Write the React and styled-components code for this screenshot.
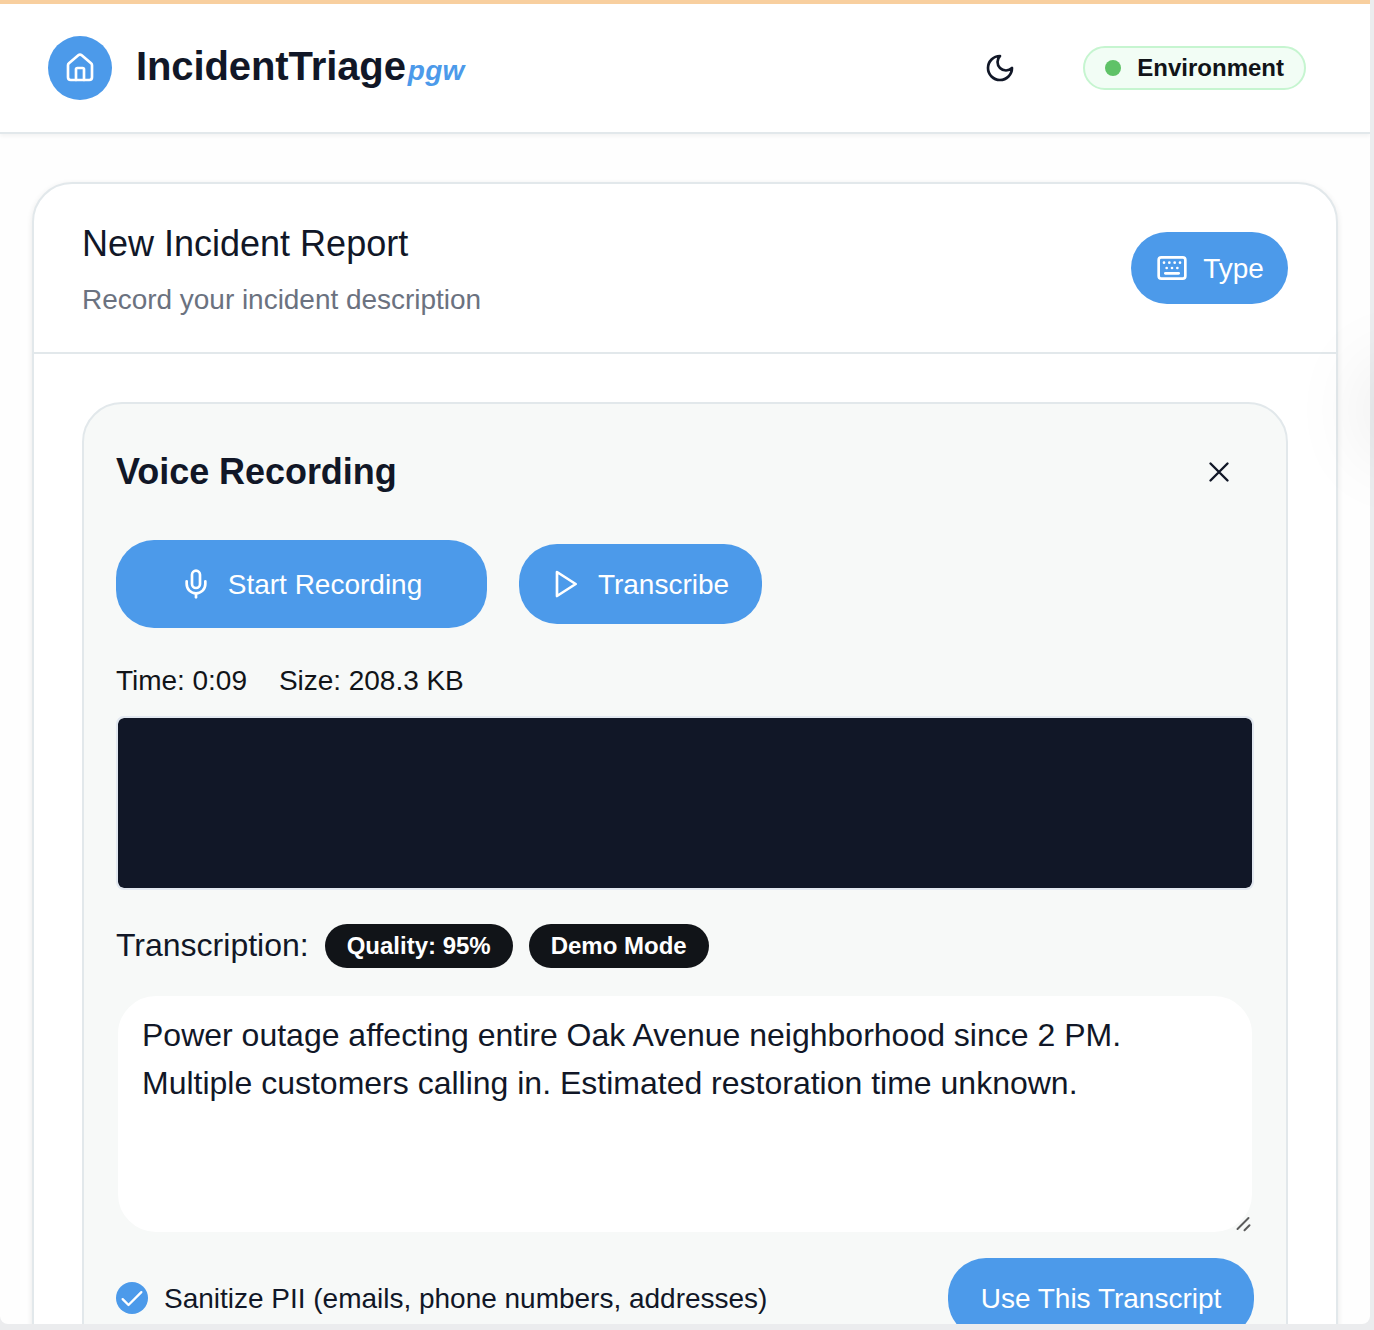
import React from "react";
import styled, { createGlobalStyle } from "styled-components";
import { House, Keyboard, Mic } from "lucide-react";

const blue = "#4c9aea";
const ink = "#111727";
const line = "#e2e8eb";

const Global = createGlobalStyle`
  *, *::before, *::after { box-sizing: border-box; }
  html, body { margin: 0; background: #ebecee; overflow: hidden; }
  body, button, textarea { font-family: "Liberation Sans", Arial, sans-serif; color: ${ink}; }
  button { border: 0; padding: 0; background: none; }
  h1, h2, h3, p { margin: 0; }
`;

const Desktop = styled.div`
  position: relative;
  width: 1374px;
  height: 1330px;
  overflow: hidden;
  background: #ebecee;
`;

const Window = styled.div`
  width: 1370px;
  height: 1324px;
  overflow: hidden;
  background: #fefefe;
  border-radius: 0 0 8px 8px;
`;

const EdgeShade = styled.div`
  position: absolute;
  left: 1384px;
  top: 380px;
  width: 40px;
  height: 60px;
  border-radius: 20px;
  box-shadow: 0 0 84px 10px rgba(0, 0, 0, 0.13);
  pointer-events: none;
`;

const Header = styled.header`
  display: flex;
  align-items: center;
  height: 134px;
  padding: 0 64px 0 48px;
  border-top: 4px solid #f8cf9f;
  border-bottom: 2px solid ${line};
  background: #fff;
  box-shadow: 0 2px 4px rgba(0, 0, 0, 0.05);
`;

const Logo = styled.div`
  display: grid;
  place-items: center;
  width: 64px;
  height: 64px;
  margin-right: 24px;
  border-radius: 50%;
  color: #fff;
  background: ${blue};
`;

const Brand = styled.h1`
  flex: 1;
  font-size: 40px;
  line-height: 56px;
  letter-spacing: -0.1px;
`;

const BrandSuffix = styled.em`
  font-size: 28px;
  letter-spacing: 0.3px;
  margin-left: 2px;
  color: ${blue};
`;

const IconButton = styled.button`
  display: grid;
  place-items: center;
  width: ${(p) => p.$w || 72}px;
  height: 72px;
`;

const EnvPill = styled.div`
  display: flex;
  align-items: center;
  gap: 16px;
  height: 44px;
  margin-left: 47px;
  padding: 0 20px;
  border: 2px solid #c6f5d0;
  border-radius: 22px;
  background: #f2fdf5;
  color: #111418;
  font-size: 24px;
  font-weight: 700;
`;

const Dot = styled.span`
  width: 16px;
  height: 16px;
  border-radius: 50%;
  background: #5fc267;
`;

const Card = styled.main`
  margin: 48px 32px 0;
  width: 1306px;
  height: 1300px;
  border: 2px solid ${line};
  border-radius: 40px;
  background: #fff;
  box-shadow: 0 2px 6px rgba(0, 0, 0, 0.09);
`;

const CardHead = styled.div`
  display: flex;
  align-items: center;
  justify-content: space-between;
  height: 170px;
  padding: 0 48px;
  border-bottom: 2px solid ${line};
`;

const Heading = styled.div`
  padding-bottom: 2px;
`;

const Title = styled.h2`
  font-size: 36px;
  font-weight: 400;
  line-height: 56px;
`;

const Subtitle = styled.p`
  margin-top: 10px;
  font-size: 28px;
  line-height: 36px;
  letter-spacing: -0.03px;
  color: #6b7280;
`;

const Button = styled.button`
  display: flex;
  align-items: center;
  justify-content: center;
  gap: 16px;
  flex: none;
  width: ${(p) => p.$w}px;
  height: ${(p) => p.$h}px;
  border-radius: 38px;
  background: ${blue};
  color: #fff;
  font-size: 28px;
  line-height: 40px;
  white-space: nowrap;
`;

const ButtonText = styled.span`
  padding-top: 2px;
`;

const TypeIcon = styled(Keyboard)`
  flex: none;
  margin: 0 -1px 0 1px;
`;

const MicIcon = styled(Mic)`
  flex: none;
  margin-left: -1px;
`;

const PlayIcon = styled.svg`
  flex: none;
  margin: 0 1px 0 -3px;
`;

const Panel = styled.section`
  display: flex;
  flex-direction: column;
  margin: 48px;
  padding: 32px;
  width: 1206px;
  height: 1100px;
  border: 2px solid ${line};
  border-radius: 40px;
  background: #f7f9f8;
`;

const PanelHead = styled.div`
  display: flex;
  align-items: center;
  justify-content: space-between;
  height: 72px;
`;

const PanelTitle = styled.h3`
  font-size: 36px;
  line-height: 56px;
  letter-spacing: -0.05px;
`;

const Actions = styled.div`
  display: flex;
  align-items: center;
  gap: 32px;
  margin-top: 32px;
`;

const Stats = styled.div`
  display: flex;
  gap: 32px;
  margin-top: 33px;
  font-size: 28px;
  line-height: 40px;
  letter-spacing: -0.03px;
  color: #111418;
`;

const Waveform = styled.div`
  height: 174px;
  margin-top: 15px;
  border: 2px solid #e2e8f0;
  border-radius: 8px;
  background: ${ink};
  background-clip: padding-box;
`;

const LabelRow = styled.div`
  display: flex;
  align-items: center;
  gap: 16px;
  height: 44px;
  margin-top: 34px;
  font-size: 32px;
`;

const Label = styled.span`
  padding-bottom: 2px;
`;

const Badge = styled.span`
  display: grid;
  place-items: center;
  width: ${(p) => p.$w}px;
  height: 44px;
  border-radius: 22px;
  background: #111418;
  color: #fff;
  font-size: 24px;
  font-weight: 700;
`;

const Field = styled.div`
  position: relative;
  height: 240px;
  margin-top: 26px;
`;

const Transcript = styled.textarea`
  display: block;
  width: 100%;
  height: 100%;
  padding: 15px 22px 15px 24px;
  border: 2px solid #f7f9f8;
  border-radius: 40px;
  outline: 0;
  resize: none;
  overflow: hidden;
  background: #fff;
  font-size: 32px;
  line-height: 48px;
`;

const Grip = styled.svg`
  position: absolute;
  right: 2px;
  bottom: 2px;
`;

const Footer = styled.div`
  display: flex;
  align-items: center;
  justify-content: space-between;
  margin-top: 24px;
`;

const CheckLabel = styled.div`
  display: flex;
  align-items: center;
  gap: 16px;
  font-size: 28px;
  letter-spacing: -0.01px;
`;

const CheckMark = styled.span`
  display: grid;
  place-items: center;
  width: 32px;
  height: 32px;
  border-radius: 50%;
  background: ${blue};
`;

export default function App() {
  return (
    <Desktop>
      <Global />
      <Window>
        <Header>
          <Logo><House size={32} /></Logo>
          <Brand>IncidentTriage<BrandSuffix>pgw</BrandSuffix></Brand>
          <IconButton aria-label="Dark mode">
            <svg width="32" height="32" viewBox="0 0 24 24" fill="none" stroke="currentColor" strokeWidth="2" strokeLinecap="round" strokeLinejoin="round">
              <path d="M12 3a6 6 0 0 0 9 9 9 9 0 1 1-9-9Z" />
            </svg>
          </IconButton>
          <EnvPill><Dot />Environment</EnvPill>
        </Header>
        <Card>
          <CardHead>
            <Heading>
              <Title>New Incident Report</Title>
              <Subtitle>Record your incident description</Subtitle>
            </Heading>
            <Button $w={157} $h={72}><TypeIcon size={32} /><ButtonText>Type</ButtonText></Button>
          </CardHead>
          <Panel>
            <PanelHead>
              <PanelTitle>Voice Recording</PanelTitle>
              <IconButton $w={70} aria-label="Close">
                <svg width="34" height="34" viewBox="0 0 24 24" fill="none" stroke="currentColor" strokeWidth="1.7" strokeLinecap="round">
                  <path d="M18 6 6 18M6 6l12 12" />
                </svg>
              </IconButton>
            </PanelHead>
            <Actions>
              <Button $w={371} $h={88}><MicIcon size={32} /><ButtonText>Start Recording</ButtonText></Button>
              <Button $w={243} $h={80}>
                <PlayIcon width="32" height="32" viewBox="0 0 24 24" fill="none" stroke="currentColor" strokeWidth="2" strokeLinecap="round" strokeLinejoin="round">
                  <polygon points="6 3 20 12 6 21 6 3" />
                </PlayIcon>
                <ButtonText>Transcribe</ButtonText>
              </Button>
            </Actions>
            <Stats><span>Time: 0:09</span><span>Size: 208.3 KB</span></Stats>
            <Waveform />
            <LabelRow>
              <Label>Transcription:</Label>
              <Badge $w={188}>Quality: 95%</Badge>
              <Badge $w={180}>Demo Mode</Badge>
            </LabelRow>
            <Field>
              <Transcript
                spellCheck={false}
                defaultValue={"Power outage affecting entire Oak Avenue neighborhood since 2 PM.\nMultiple customers calling in. Estimated restoration time unknown."}
              />
              <Grip width="16" height="16" viewBox="0 0 16 16" stroke="#5b5b5b" strokeWidth="2" strokeLinecap="round">
                <path d="M1.5 13 12.5 2M8.5 14.2 13.5 9.2" />
              </Grip>
            </Field>
            <Footer>
              <CheckLabel>
                <CheckMark>
                  <svg width="28" height="28" viewBox="0 0 24 24" fill="none" stroke="#fff" strokeWidth="2" strokeLinecap="round" strokeLinejoin="round">
                    <path d="M20 7 9 18 4 13" />
                  </svg>
                </CheckMark>
                <ButtonText>Sanitize PII (emails, phone numbers, addresses)</ButtonText>
              </CheckLabel>
              <Button $w={306} $h={80}><ButtonText>Use This Transcript</ButtonText></Button>
            </Footer>
          </Panel>
        </Card>
      </Window>
      <EdgeShade />
    </Desktop>
  );
}
